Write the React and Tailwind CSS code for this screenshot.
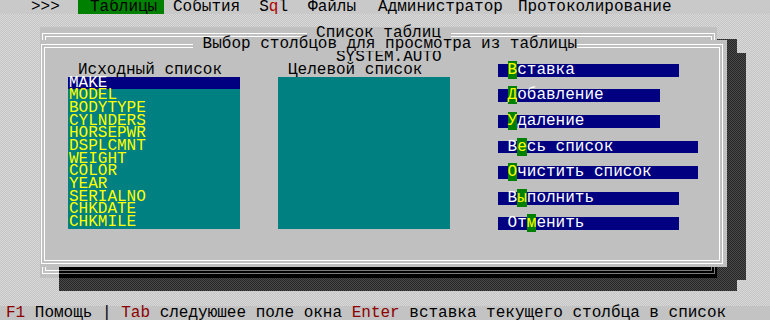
const lightDots = 'bg-[#cfcfcf] bg-[image:repeating-conic-gradient(#c5c5c5_0_25%,#d8d8d8_0_50%)] bg-[length:2px_2px]'

const fields = ['MAKE', 'MODEL', 'BODYTYPE', 'CYLNDERS', 'HORSEPWR', 'DSPLCMNT', 'WEIGHT', 'COLOR', 'YEAR', 'SERIALNO', 'CHKDATE', 'CHKMILE']

const buttons = [
  { pre: '', hot: 'В', post: 'ставка', w: 'w-[181px]' },
  { pre: '', hot: 'Д', post: 'обавление', w: 'w-[162px]' },
  { pre: '', hot: 'У', post: 'даление', w: 'w-[162px]' },
  { pre: 'В', hot: 'е', post: 'сь список', w: 'w-[200px]' },
  { pre: '', hot: 'О', post: 'чистить список', w: 'w-[200px]' },
  { pre: 'В', hot: 'ы', post: 'полнить', w: 'w-[181px]' },
  { pre: 'От', hot: 'м', post: 'енить', w: 'w-[181px]' },
]

function Shadow({ className }) {
  return (
    <div
      className={`absolute bg-[#383838] bg-[image:repeating-conic-gradient(#4a4a4a_0_25%,#262626_0_50%)] bg-[length:2px_2px] ${className}`}
    />
  )
}

function Button({ pre, hot, post, w }) {
  return (
    <div className={`h-[12.8px] leading-[12.8px] pl-[9.6px] bg-[#000080] text-white whitespace-pre ${w}`}>
      {pre}
      <span className="bg-[#008000] text-[#ffff00]">{hot}</span>
      {post}
    </div>
  )
}

export default function App() {
  return (
    <div className="relative w-[770px] h-[320px] overflow-hidden flex flex-col font-['Liberation_Mono',monospace] text-[16px] text-black">
      {/* menu bar */}
      <div className="h-[14px] shrink-0 flex items-start leading-[14px] bg-[#c9c9c9] whitespace-pre">
        <span className="ml-[31px] w-[47px]">&gt;&gt;&gt;</span>
        <span className="w-[86px] h-[14px] pl-[12px] bg-[#008000]">Таблицы</span>
        <span className="ml-[9px]">События</span>
        <span className="ml-[19px]">
          S<span className="text-[#b00000]">q</span>l
        </span>
        <span className="ml-[20px]">Файлы</span>
        <span className="ml-[22px]">Администратор</span>
        <span className="ml-[15px]">Протоколирование</span>
      </div>

      {/* desktop */}
      <div className={`flex-1 ${lightDots}`} />

      {/* status line */}
      <div className="h-[14px] shrink-0 leading-[14px] pl-[6px] bg-[#c3c3c3] whitespace-pre">
        <span className="text-[#8c0000]">F1</span> Помощь | <span className="text-[#8c0000]">Tab</span> следуюшее поле окна{' '}
        <span className="text-[#8c0000]">Enter</span> вставка текущего столбца в список
      </div>

      {/* window shadows */}
      <Shadow className="left-[59px] top-[39px] w-[678px] h-[252px]" />
      <Shadow className="left-[59px] top-[53px] w-[687px] h-[227px]" />

      {/* outer window: Список таблиц */}
      <div className="absolute left-[40px] top-[27px] w-[677px] h-[251px] bg-[#c0c0c0] pl-[2px] pt-[6px] pr-[2px] pb-[4px] flex">
        <div className="relative flex-1 border-4 border-double border-white">
          <span className="absolute -top-[10px] left-1/2 -translate-x-1/2 leading-[13px] px-[9.6px] bg-[#c0c0c0] whitespace-pre">
            Список таблиц
          </span>
        </div>
      </div>

      {/* shadow of the inner window falling on the outer one */}
      <div className="absolute left-[59px] top-[267px] w-[658px] h-[11px] bg-black overflow-hidden">
        <div className="absolute left-0 -top-[10px] w-[656px] h-[17px] border-r-4 border-b-4 border-double border-[#7a7a7a]" />
      </div>

      {/* inner window: Выбор столбцов */}
      <div className="absolute left-[40px] top-[40px] w-[687px] h-[227px] bg-[#c0c0c0] pl-[1px] pt-[4px] pr-[4px] pb-[3px] flex">
        <div className="relative flex-1 border-4 border-double border-white">
          <span className="absolute -top-[10px] left-[148px] leading-[13px] bg-[#c0c0c0] whitespace-pre">
            {' '}Выбор столбцов для просмотра из таблицы
          </span>

          <div className="pt-[3px] pl-[291px] leading-[12.8px]">SYSTEM.AUTO</div>

          <div className="flex items-start ml-[23px]">
            <div className="w-[172px]">
              <div className="h-[12.8px] leading-[12.8px] pl-[10px] whitespace-pre">Исходный список</div>
              <div className="h-[152px] bg-[#008080]">
                {fields.map((f, i) => (
                  <div
                    key={f}
                    className={`h-[12.67px] leading-[12.67px] pl-[1px] ${i === 0 ? 'bg-[#000080] text-white' : 'text-[#ffff00]'}`}
                  >
                    {f}
                  </div>
                ))}
              </div>
            </div>

            <div className="w-[172px] ml-[38px]">
              <div className="h-[12.8px] leading-[12.8px] pl-[10px] whitespace-pre">Целевой список</div>
              <div className="h-[152px] bg-[#008080]" />
            </div>

            <div className="ml-[48px] flex flex-col gap-[12.8px]">
              {buttons.map((b) => (
                <Button key={b.post} {...b} />
              ))}
            </div>
          </div>
        </div>
      </div>
    </div>
  )
}
